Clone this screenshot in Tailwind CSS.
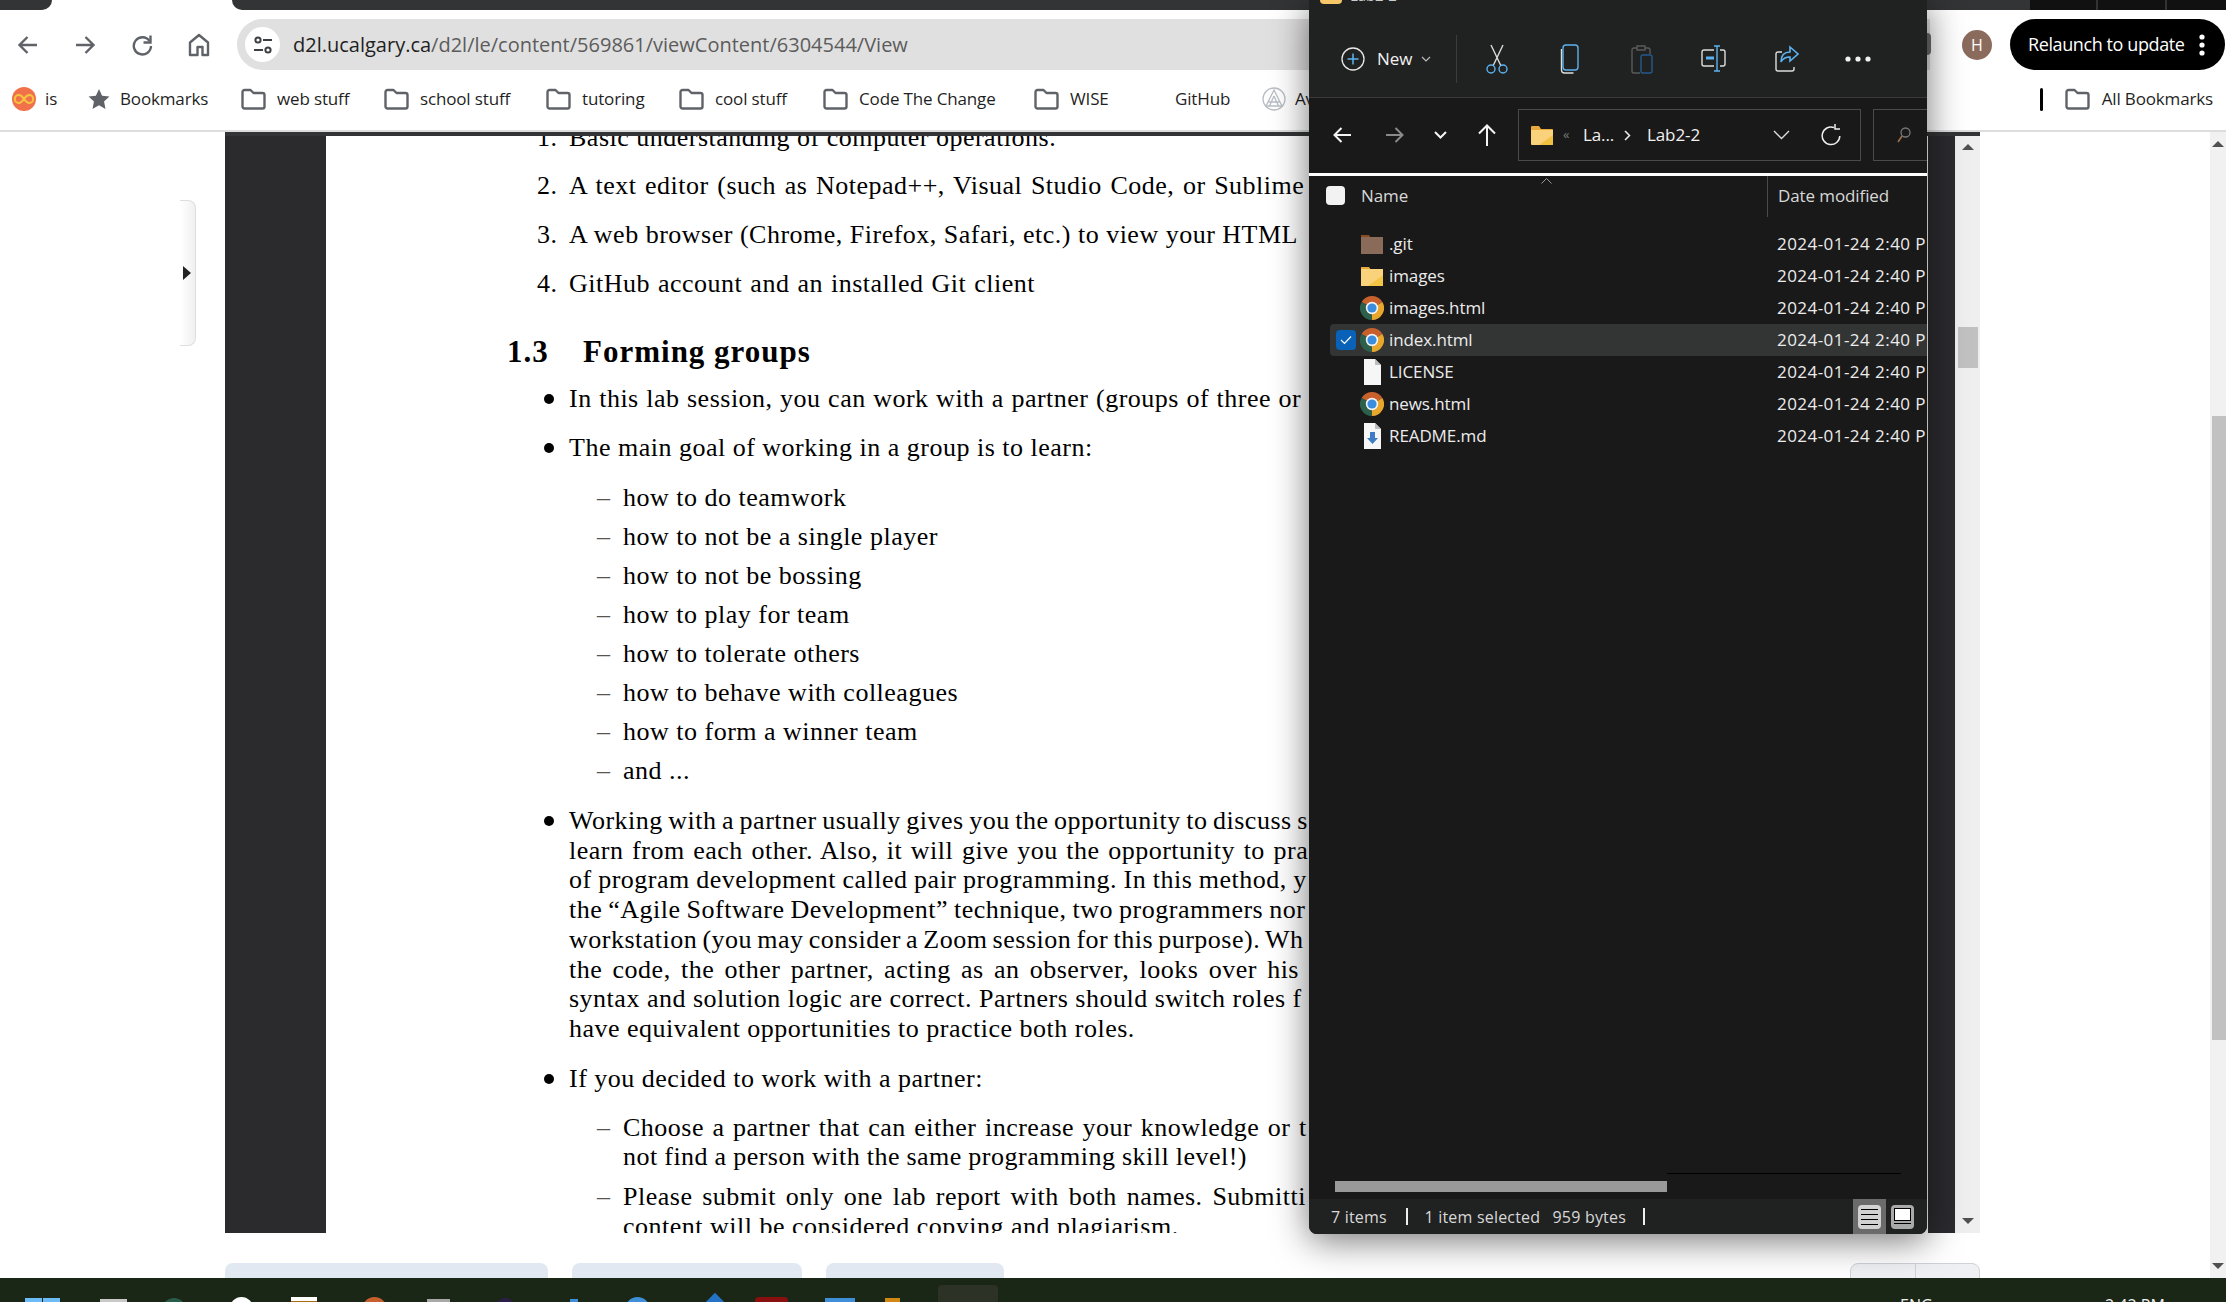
<!DOCTYPE html>
<html lang="en">
  <head>
    <meta charset="UTF-8" />
    <title>Lab 2 - D2L</title>
    <script src="https://cdn.jsdelivr.net/npm/@tailwindcss/browser@4"></script>
  </head>
  <body class="bg-white overflow-hidden font-['Open_Sans',sans-serif]">
    <!-- shared icons -->
    <svg class="hidden">
      <symbol id="bm-folder" viewBox="0 0 25 22">
        <path d="M1.5 4a2 2 0 0 1 2-2h6l3 3h9a2 2 0 0 1 2 2v11.5a2 2 0 0 1-2 2h-18a2 2 0 0 1-2-2z" fill="none" stroke="#5f6368" stroke-width="2.4" stroke-linejoin="round" />
      </symbol>
      <symbol id="chrome" viewBox="0 0 24 24">
        <path d="M12 12 1.6 6A12 12 0 0 1 22.4 6z" fill="#c8602e" />
        <path d="M12 12 22.4 6A12 12 0 0 1 12 24z" fill="#e8a72c" />
        <path d="M12 12 12 24A12 12 0 0 1 1.6 6z" fill="#2e5f4a" />
        <circle cx="12" cy="12" r="6.2" fill="#f4f4f4" />
        <circle cx="12" cy="12" r="4.6" fill="#3b8de0" />
      </symbol>
    </svg>

    <div class="relative w-[2226px] h-[1302px] flex flex-col overflow-hidden">
      <!-- tab strip -->
      <div class="h-[10px] flex shrink-0">
        <div class="w-[52px] bg-[#333435] rounded-br-xl"></div>
        <div class="w-[180px] bg-white"></div>
        <div class="w-[1798px] bg-[#333435] rounded-bl-xl"></div>
        <div class="flex-1 flex bg-[#111]">
          <div class="w-[68px] border-r-2 border-[#333]"></div>
          <div class="w-[69px] border-r-2 border-[#333]"></div>
        </div>
      </div>

      <!-- toolbar -->
      <div class="h-[60px] flex items-center shrink-0 pt-[9px]">
        <div class="w-[57px] ml-[-1px] flex justify-center">
          <svg width="22" height="20" viewBox="0 0 22 20" fill="none" stroke="#5f6368" stroke-width="2.4"><path d="M20 10H3M10.5 2 2.5 10l8 8" /></svg>
        </div>
        <div class="w-[57px] flex justify-center">
          <svg width="22" height="20" viewBox="0 0 22 20" fill="none" stroke="#5f6368" stroke-width="2.4"><path d="M2 10h17M11.5 2l8 8-8 8" /></svg>
        </div>
        <div class="w-[57px] flex justify-center">
          <svg width="22" height="22" viewBox="0 0 22 22" fill="none" stroke="#5f6368" stroke-width="2.4"><path d="M18.5 7A8.6 8.6 0 1 0 20 12" /><path d="M19.5 1.5v7h-7" /></svg>
        </div>
        <div class="w-[57px] flex justify-center">
          <svg width="22" height="24" viewBox="0 0 22 24" fill="none" stroke="#5f6368" stroke-width="2.4" stroke-linejoin="round"><path d="M2 22V9.5L11 2l9 7.5V22h-5.5v-8h-5v8z" /></svg>
        </div>
        <div class="ml-[10px] w-[1693px] h-[51px] bg-[#e0e0e0] rounded-l-full flex items-center pl-2 shrink-0">
          <div class="w-[35px] h-[35px] rounded-full bg-white flex items-center justify-center">
            <svg width="20" height="20" viewBox="0 0 20 20" fill="none" stroke="#3c4043" stroke-width="2"><circle cx="5" cy="5" r="2.6" /><path d="M10 5h9M1 15h9" /><circle cx="15" cy="15" r="2.6" /></svg>
          </div>
          <div class="ml-[13px] text-[20px] tracking-[0px] text-[#5c5c5c] whitespace-nowrap"><span class="text-[#1f1f1f]">d2l.ucalgary.ca</span>/d2l/le/content/569861/viewContent/6304544/View</div>
        </div>
        <div class="ml-[32px] w-[30px] h-[30px] rounded-full bg-[#8b6b5b] text-white text-[16px] flex items-center justify-center shrink-0">H</div>
        <div class="ml-[18px] w-[215px] h-[51px] rounded-full bg-black text-white flex items-center pl-[18px] shrink-0">
          <span class="text-[18px] tracking-[-0.4px] whitespace-nowrap">Relaunch to update</span>
          <svg class="ml-auto mr-[20px]" width="6" height="22" viewBox="0 0 6 22" fill="#fff"><circle cx="3" cy="3" r="2.6" /><circle cx="3" cy="11" r="2.6" /><circle cx="3" cy="19" r="2.6" /></svg>
        </div>
      </div>

      <!-- bookmarks bar -->
      <div class="h-[62px] pb-[2px] flex items-center justify-between shrink-0 border-b-2 border-[#dddddd] text-[17px] tracking-[-0.15px] text-[#1f1f1f] whitespace-nowrap">
        <div class="flex items-center pl-[12px]">
          <div class="w-[76px] flex items-center gap-[9px]">
            <svg width="24" height="24" viewBox="0 0 24 24"><circle cx="12" cy="12" r="12" fill="#f0714a" /><path d="M12 12c-2-3-3.5-4-5.2-4a4 4 0 0 0 0 8c1.700 0 3.200-1 5.200-4s3.500-4 5.200-4a4 4 0 0 1 0 8c-1.700 0-3.200-1-5.200-4z" fill="none" stroke="#f5c542" stroke-width="2" /></svg>
            <span>is</span>
          </div>
          <div class="w-[153px] flex items-center gap-[10px]">
            <svg width="22" height="22" viewBox="0 0 24 24" fill="#5f6368"><path d="m12 1 3.400 7.400 8 .9-5.900 5.500 1.600 8L12 18.800l-7.100 4 1.600-8L.6 9.300l8-.9z" /></svg>
            <span>Bookmarks</span>
          </div>
          <div class="w-[143px] flex items-center gap-[11px]"><svg width="25" height="22"><use href="#bm-folder" /></svg><span>web stuff</span></div>
          <div class="w-[162px] flex items-center gap-[11px]"><svg width="25" height="22"><use href="#bm-folder" /></svg><span>school stuff</span></div>
          <div class="w-[133px] flex items-center gap-[11px]"><svg width="25" height="22"><use href="#bm-folder" /></svg><span>tutoring</span></div>
          <div class="w-[144px] flex items-center gap-[11px]"><svg width="25" height="22"><use href="#bm-folder" /></svg><span>cool stuff</span></div>
          <div class="w-[211px] flex items-center gap-[11px]"><svg width="25" height="22"><use href="#bm-folder" /></svg><span>Code The Change</span></div>
          <div class="w-[141px] flex items-center gap-[11px]"><svg width="25" height="22"><use href="#bm-folder" /></svg><span>WISE</span></div>
          <div class="w-[87px]">GitHub</div>
          <div class="flex items-center gap-[9px]">
            <svg width="24" height="24" viewBox="0 0 24 24" fill="none" stroke="#b9bec4" stroke-width="1.300"><circle cx="12" cy="12" r="11" /><path d="M12 3 4 19h16zM12 9l-4.500 10M12 9l4.500 10M6 15h12" /></svg>
            <span>Av</span>
          </div>
        </div>
        <div class="flex items-center pr-[13px]">
          <div class="w-[3px] h-[23px] bg-black rounded-full mr-[22px]"></div>
          <svg class="mr-[12px]" width="25" height="22"><use href="#bm-folder" /></svg>
          <span>All Bookmarks</span>
        </div>
      </div>

      <!-- page area -->
      <div class="relative flex-1 flex overflow-hidden">
        <!-- left collapsed panel -->
        <div class="w-[225px] shrink-0 pl-[180px] pt-[68px]">
          <div class="w-[16px] h-[146px] rounded-r-lg bg-gradient-to-r from-white to-[#f0f0f0] border border-l-0 border-[#dedede] flex items-center pl-[3px]">
            <div class="w-0 h-0 border-y-[7px] border-y-transparent border-l-[8px] border-l-[#222]"></div>
          </div>
        </div>

        <!-- document viewer and its buttons -->
        <div class="w-[1755px] shrink-0 flex flex-col">
          <div class="h-[1101px] shrink-0 flex border-t-4 border-[#333435]">
            <div class="w-[101px] bg-[#2b2b2d] shrink-0"></div>
            <div class="w-[1602px] shrink-0 overflow-hidden bg-white pl-[211px] font-['Liberation_Serif',serif] text-[26px] tracking-[0.5px] leading-[30px] text-black whitespace-nowrap">
              <div class="mt-[-13px] flex"><span class="w-[32px]">1.</span><span>Basic understanding of computer operations.</span></div>
              <div class="mt-[18px] flex"><span class="w-[32px]">2.</span><span class="[word-spacing:1.6px]">A text editor (such as Notepad++, Visual Studio Code, or Sublime</span></div>
              <div class="mt-[19px] flex"><span class="w-[32px]">3.</span><span>A web browser (Chrome, Firefox, Safari, etc.) to view your HTML</span></div>
              <div class="mt-[19px] flex"><span class="w-[32px]">4.</span><span class="[word-spacing:1px]">GitHub account and an installed Git client</span></div>

              <div class="mt-[35px] ml-[-30px] h-[36px] flex items-center text-[31px] font-bold tracking-[1px]"><span class="w-[76px]">1.3</span><span>Forming groups</span></div>

              <div class="mt-[14px] flex"><span class="w-[32px] h-[30px] pl-[7px] flex items-center"><i class="block w-[10px] h-[10px] rounded-full bg-black"></i></span><span class="[word-spacing:0.5px]">In this lab session, you can work with a partner (groups of three or</span></div>
              <div class="mt-[19px] flex"><span class="w-[32px] h-[30px] pl-[7px] flex items-center"><i class="block w-[10px] h-[10px] rounded-full bg-black"></i></span><span>The main goal of working in a group is to learn:</span></div>

              <div class="mt-[20px] ml-[60px] flex flex-col gap-[9px]">
                <div class="flex"><span class="w-[26px] text-[#555]">–</span><span>how to do teamwork</span></div>
                <div class="flex"><span class="w-[26px] text-[#555]">–</span><span>how to not be a single player</span></div>
                <div class="flex"><span class="w-[26px] text-[#555]">–</span><span>how to not be bossing</span></div>
                <div class="flex"><span class="w-[26px] text-[#555]">–</span><span>how to play for team</span></div>
                <div class="flex"><span class="w-[26px] text-[#555]">–</span><span>how to tolerate others</span></div>
                <div class="flex"><span class="w-[26px] text-[#555]">–</span><span>how to behave with colleagues</span></div>
                <div class="flex"><span class="w-[26px] text-[#555]">–</span><span>how to form a winner team</span></div>
                <div class="flex"><span class="w-[26px] text-[#555]">–</span><span>and ...</span></div>
              </div>

              <div class="mt-[20px] flex leading-[29.7px]">
                <span class="w-[32px] h-[30px] pl-[7px] flex items-center"><i class="block w-[10px] h-[10px] rounded-full bg-black"></i></span>
                <div>
                  <div class="[word-spacing:-1.5px]">Working with a partner usually gives you the opportunity to discuss s</div>
                  <div class="[word-spacing:1.6px]">learn from each other. Also, it will give you the opportunity to pra</div>
                  <div class="[word-spacing:-0.5px]">of program development called pair programming. In this method, y</div>
                  <div class="[word-spacing:-1px]">the “Agile Software Development” technique, two programmers nor</div>
                  <div class="[word-spacing:-1.8px]">workstation (you may consider a Zoom session for this purpose). Wh</div>
                  <div class="[word-spacing:3.3px]">the code, the other partner, acting as an observer, looks over his</div>
                  <div>syntax and solution logic are correct. Partners should switch roles f</div>
                  <div>have equivalent opportunities to practice both roles.</div>
                </div>
              </div>

              <div class="mt-[20px] flex"><span class="w-[32px] h-[30px] pl-[7px] flex items-center"><i class="block w-[10px] h-[10px] rounded-full bg-black"></i></span><span>If you decided to work with a partner:</span></div>

              <div class="mt-[19px] ml-[60px] flex leading-[29.7px]">
                <span class="w-[26px] text-[#555]">–</span>
                <div>
                  <div class="[word-spacing:1.5px]">Choose a partner that can either increase your knowledge or t</div>
                  <div class="[word-spacing:-0.5px]">not find a person with the same programming skill level!)</div>
                </div>
              </div>
              <div class="mt-[10px] ml-[60px] flex leading-[29.7px]">
                <span class="w-[26px] text-[#555]">–</span>
                <div>
                  <div class="[word-spacing:2.8px]">Please submit only one lab report with both names. Submitti</div>
                  <div>content will be considered copying and plagiarism.</div>
                </div>
              </div>
            </div>
            <div class="w-[27px] bg-[#2b2b2f] shrink-0"></div>
            <div class="w-[25px] bg-[#efefef] shrink-0 flex flex-col items-center pt-[8px] pb-[9px]">
              <div class="w-0 h-0 border-x-[6px] border-x-transparent border-b-[6px] border-b-[#505050]"></div>
              <div class="w-[20px] h-[41px] bg-[#c1c1c1] mt-[177px]"></div>
              <div class="mt-auto w-0 h-0 border-x-[6px] border-x-transparent border-t-[6px] border-t-[#505050]"></div>
            </div>
          </div>
          <div class="mt-[30px] flex gap-[24px]">
            <div class="w-[323px] h-[40px] rounded-t-lg bg-[#e2e8f2]"></div>
            <div class="w-[230px] h-[40px] rounded-t-lg bg-[#e2e8f2]"></div>
            <div class="w-[178px] h-[40px] rounded-t-lg bg-[#e2e8f2]"></div>
            <div class="ml-auto w-[130px] h-[40px] rounded-t-lg border border-[#cfd2d6] bg-[#eef0f3] flex">
              <div class="w-[65px] border-r border-[#cfd2d6]"></div>
            </div>
          </div>
        </div>

        <div class="flex-1"></div>

        <!-- page scrollbar -->
        <div class="w-[16px] shrink-0 bg-[#f1f1f1] flex flex-col items-center pt-[9px] pb-[9px]">
          <div class="w-0 h-0 border-x-[6px] border-x-transparent border-b-[6px] border-b-[#505050]"></div>
          <div class="w-[14px] h-[624px] bg-[#c1c1c1] mt-[269px] ml-[2px]"></div>
          <div class="mt-auto w-0 h-0 border-x-[6px] border-x-transparent border-t-[6px] border-t-[#505050]"></div>
        </div>
      </div>

      <!-- taskbar -->
      <div class="relative z-30 h-[24px] shrink-0 bg-[#1a2716] flex overflow-hidden">
        <div class="w-[1900px] relative">
          <div class="absolute left-[25px] top-[20px] w-[35px] h-[10px] grid grid-cols-2 gap-[1px]"><div class="bg-[#6cbcf7]"></div><div class="bg-[#6cbcf7]"></div></div>
          <div class="absolute left-[100px] top-[21px] w-[27px] h-[6px] bg-[#c9c9c9]"></div>
          <div class="absolute left-[162px] top-[20px] w-[24px] h-[24px] rounded-full bg-[#2a5c4c]"></div>
          <div class="absolute left-[230px] top-[19px] w-[23px] h-[23px] rounded-full bg-white"></div>
          <div class="absolute left-[291px] top-[19px] w-[26px] h-[8px] bg-white border-b-4 border-[#b06a12]"></div>
          <div class="absolute left-[362px] top-[19px] w-[25px] h-[25px] rounded-full bg-[#c8602e]"></div>
          <div class="absolute left-[427px] top-[21px] w-[23px] h-[8px] bg-[#a8a8a8]"></div>
          <div class="absolute left-[495px] top-[20px] w-[20px] h-[20px] rounded-full bg-[#2b1f4a]"></div>
          <div class="absolute left-[570px] top-[21px] w-[8px] h-[8px] bg-[#3f8fd8]"></div>
          <div class="absolute left-[625px] top-[19px] w-[25px] h-[25px] rounded-full bg-[#3f8fd8]"></div>
          <div class="absolute left-[705px] top-[19px] w-[20px] h-[20px] rotate-45 bg-[#2573c4]"></div>
          <div class="absolute left-[755px] top-[19px] w-[33px] h-[10px] rounded-t bg-[#8a1010]"></div>
          <div class="absolute left-[825px] top-[20px] w-[30px] h-[10px] bg-[#3f8fd8]"></div>
          <div class="absolute left-[885px] top-[20px] w-[15px] h-[10px] bg-[#d08a14]"></div>
          <div class="absolute left-[938px] top-[7px] w-[60px] h-[24px] rounded-t bg-[#2c3226]"></div>
        </div>
        <div class="w-[205px] pt-[17px] text-[16px] leading-[20px] text-[#f0f0f0] whitespace-nowrap">ENG</div>
        <div class="pt-[17px] text-[16px] leading-[20px] text-[#f0f0f0] whitespace-nowrap">2:42 PM</div>
      </div>

      <!-- file explorer window, floating over the browser -->
      <div class="absolute left-[1309px] top-0 z-20 w-[618px] h-[1234px] flex flex-col overflow-hidden rounded-b-lg bg-[#191919] shadow-[0_6px_36px_rgba(0,0,0,0.55)] text-[#f2f2f2] text-[17px] tracking-[-0.1px] whitespace-nowrap">
        <!-- command bar -->
        <div class="relative h-[98px] shrink-0 bg-[#202121] border-b border-[#3a3a3a] overflow-hidden">
          <div class="flex items-center mt-[-15px] h-[20px] pl-[11px] text-[15px] text-[#ccc]">
            <div class="w-[22px] h-[18px] bg-[#f6c768] rounded-sm"></div>
            <span class="ml-[8px]">Lab2-2</span>
            <div class="ml-auto mr-[103px] w-[10px] h-[10px] border border-[#999] rounded-sm"></div>
            <span class="mr-[32px] text-[#999]">✕</span>
          </div>
          <div class="flex items-center h-[48px] mt-[30px] pl-[32px]">
            <svg width="24" height="24" viewBox="0 0 24 24" fill="none"><circle cx="12" cy="12" r="11" stroke="#e8e8e8" stroke-width="1.300" /><path d="M12 6.500v11M6.500 12h11" stroke="#5cb2f0" stroke-width="1.500" /></svg>
            <span class="ml-[12px] w-[44px]">New</span>
            <svg width="10" height="6" viewBox="0 0 10 6" fill="none" stroke="#bbb" stroke-width="1.200"><path d="m1 1 4 4 4-4" /></svg>
            <div class="ml-[25px] w-[1px] h-[48px] bg-[#3c3c3c]"></div>
            <svg class="ml-[29px]" width="22" height="30" viewBox="0 0 22 30" fill="none" stroke-width="1.400"><path d="M5 1l10 21M17 1 7 22" stroke="#ddd" /><circle cx="5" cy="25" r="4" stroke="#5cb2f0" /><circle cx="17" cy="25" r="4" stroke="#5cb2f0" /></svg>
            <svg class="ml-[52px]" width="20" height="30" viewBox="0 0 20 30" fill="none" stroke-width="1.400"><path d="M1.500 5v21a3 3 0 0 0 3 3h9" stroke="#ddd" /><rect x="3" y="1" width="15" height="25" rx="3" stroke="#5cb2f0" /></svg>
            <svg class="ml-[51px]" width="22" height="30" viewBox="0 0 22 30" fill="none" stroke-width="1.400"><path d="M6 4H3a2 2 0 0 0-2 2v21a2 2 0 0 0 2 2h6M14 4h3a2 2 0 0 1 2 2v4M6 2h8v4H6z" stroke="#5a5a5a" /><rect x="10" y="11" width="11" height="18" rx="2" stroke="#245a8c" /></svg>
            <svg class="ml-[48px]" width="26" height="28" viewBox="0 0 26 28" fill="none" stroke-width="1.400"><path d="M13 5H3a2 2 0 0 0-2 2v12a2 2 0 0 0 2 2h10M19 5h3a2 2 0 0 1 2 2v12a2 2 0 0 1-2 2h-3" stroke="#ddd" /><path d="M5 13h8" stroke="#5cb2f0" stroke-width="3" /><path d="M16 1v25M13 1h6M13 26h6" stroke="#5cb2f0" /></svg>
            <svg class="ml-[48px]" width="24" height="28" viewBox="0 0 24 28" fill="none" stroke-width="1.400"><path d="M7 7H3a2 2 0 0 0-2 2v15a2 2 0 0 0 2 2h14a2 2 0 0 0 2-2v-2" stroke="#ddd" /><path d="M15 2l8 7-8 7v-4c-4 0-7 1-9 5 0-6 3-10 9-10z" stroke="#5cb2f0" stroke-width="1.600" /></svg>
            <svg class="ml-[46px]" width="26" height="6" viewBox="0 0 26 6" fill="#f2f2f2"><circle cx="3" cy="3" r="2.600" /><circle cx="13" cy="3" r="2.600" /><circle cx="23" cy="3" r="2.600" /></svg>
          </div>
        </div>

        <!-- address row -->
        <div class="h-[75px] shrink-0 flex items-center pl-[23px] pb-[1px]">
          <svg width="20" height="18" viewBox="0 0 20 18" fill="none" stroke="#f4f4f4" stroke-width="2"><path d="M19 9H3M9.500 2 2.500 9l7 7" /></svg>
          <svg class="ml-[33px]" width="20" height="18" viewBox="0 0 20 18" fill="none" stroke="#8a8a8a" stroke-width="2"><path d="M1 9h16M10.500 2l7 7-7 7" /></svg>
          <svg class="ml-[29px]" width="13" height="8" viewBox="0 0 13 8" fill="none" stroke="#f4f4f4" stroke-width="2"><path d="m1 1 5.500 5.500L12 1" /></svg>
          <svg class="ml-[30px]" width="20" height="24" viewBox="0 0 20 24" fill="none" stroke="#f4f4f4" stroke-width="2"><path d="M10 23V3M2 10.500l8-8 8 8" /></svg>
          <div class="ml-[21px] w-[343px] h-[52px] shrink-0 border border-[#4a4a4a] flex items-center pl-[12px]">
            <svg width="22" height="20" viewBox="0 0 22 20"><path d="M0 2a1 1 0 0 1 1-1h7l2 3h11a1 1 0 0 1 1 1v2H0z" fill="#e8a93c" /><path d="M0 5h22v14a1 1 0 0 1-1 1H1a1 1 0 0 1-1-1z" fill="#fbd27c" /><path d="M22 10v9a1 1 0 0 1-1 1H8z" fill="#f0c040" /></svg>
            <span class="ml-[10px] w-[20px] text-[13px] text-[#777]">«</span>
            <span class="w-[41px]">La...</span>
            <svg width="7" height="11" viewBox="0 0 7 11" fill="none" stroke="#eee" stroke-width="1.500"><path d="m1 1 4.500 4.500L1 10" /></svg>
            <span class="ml-[16px] w-[126px]">Lab2-2</span>
            <svg width="17" height="10" viewBox="0 0 17 10" fill="none" stroke="#ddd" stroke-width="1.400"><path d="m1 1 7.500 7.500L16 1" /></svg>
            <svg class="ml-[31px]" width="20" height="22" viewBox="0 0 20 22" fill="none" stroke="#eee" stroke-width="1.500"><path d="M13 3.500A8.800 8.800 0 1 0 18.800 12" /><path d="M14 0v5h5" /></svg>
          </div>
          <div class="ml-[12px] flex-1 h-[52px] border border-[#4a4a4a] border-r-0 flex items-center pl-[23px]">
            <svg width="14" height="16" viewBox="0 0 14 16" fill="none" stroke-width="1.300"><circle cx="8.500" cy="5.500" r="4.500" stroke="#777" /><path d="M5 9 1 15" stroke="#a1704a" stroke-width="1.600" /></svg>
          </div>
        </div>

        <!-- file list -->
        <div class="h-[3px] bg-white shrink-0"></div>
        <div class="relative h-[41px] shrink-0 flex items-center pl-[17px] text-[#d8d8d8]">
          <div class="w-[19px] h-[19px] rounded-[4px] bg-[#f2f2f2] mb-[2px]"></div>
          <span class="ml-[16px] w-[406px] mb-[2px]">Name</span>
          <div class="w-[1px] h-[41px] bg-[#4a4a4a]"></div>
          <span class="ml-[10px] mb-[2px]">Date modified</span>
          <svg class="absolute left-[232px] top-[2px]" width="11" height="6" viewBox="0 0 11 6" fill="none" stroke="#999" stroke-width="1"><path d="m.5 5.500 5-5 5 5" /></svg>
        </div>

        <div class="flex-1 mt-[11px] ml-[21px] text-[#ececec]">
          <div class="h-[32px] flex items-center pl-[30px]">
            <div class="w-[24px] mr-[5px] flex justify-center"><svg width="22" height="20" viewBox="0 0 22 20"><path d="M0 1h8l2 3H0z" fill="#8a4a22" /><rect y="3" width="22" height="17" fill="#8a6a58" /></svg></div>
            <span class="w-[388px]">.git</span><span class="tracking-[0.45px]">2024-01-24 2:40 P</span>
          </div>
          <div class="h-[32px] flex items-center pl-[30px]">
            <div class="w-[24px] mr-[5px] flex justify-center"><svg width="22" height="20" viewBox="0 0 22 20"><path d="M0 1h8l2 3H0z" fill="#e8a93c" /><rect y="3" width="22" height="17" fill="#fbd27c" /><path d="M22 9v11H7z" fill="#f3c544" /></svg></div>
            <span class="w-[388px]">images</span><span class="tracking-[0.45px]">2024-01-24 2:40 P</span>
          </div>
          <div class="h-[32px] flex items-center pl-[30px]">
            <svg class="w-[24px] h-[24px] mr-[5px]"><use href="#chrome" /></svg>
            <span class="w-[388px]">images.html</span><span class="tracking-[0.45px]">2024-01-24 2:40 P</span>
          </div>
          <div class="h-[32px] flex items-center pl-[6px] bg-[#333535] rounded-l-sm">
            <div class="w-[20px] h-[20px] mr-[4px] rounded-[4px] bg-[#0a62b8] flex items-center justify-center">
              <svg width="12" height="10" viewBox="0 0 12 10" fill="none" stroke="#fff" stroke-width="1.200"><path d="m1 5 3.500 3.500L11 1.500" /></svg>
            </div>
            <svg class="w-[24px] h-[24px] mr-[5px]"><use href="#chrome" /></svg>
            <span class="w-[388px]">index.html</span><span class="tracking-[0.45px]">2024-01-24 2:40 P</span>
          </div>
          <div class="h-[32px] flex items-center pl-[30px]">
            <div class="w-[24px] mr-[5px] flex justify-center"><svg width="17" height="26" viewBox="0 0 17 26"><path d="M0 0h11l6 6v20H0z" fill="#f6f6f6" /><path d="M11 0v6h6z" fill="#bdbdbd" /></svg></div>
            <span class="w-[388px]">LICENSE</span><span class="tracking-[0.45px]">2024-01-24 2:40 P</span>
          </div>
          <div class="h-[32px] flex items-center pl-[30px]">
            <svg class="w-[24px] h-[24px] mr-[5px]"><use href="#chrome" /></svg>
            <span class="w-[388px]">news.html</span><span class="tracking-[0.45px]">2024-01-24 2:40 P</span>
          </div>
          <div class="h-[32px] flex items-center pl-[30px]">
            <div class="w-[24px] mr-[5px] flex justify-center"><svg width="17" height="26" viewBox="0 0 17 26"><path d="M0 0h11l6 6v20H0z" fill="#f6f6f6" /><path d="M11 0v6h6z" fill="#bdbdbd" /><path d="M6 9h5v6h3l-5.500 6L3 15h3z" fill="#3f7cc4" /></svg></div>
            <span class="w-[388px]">README.md</span><span class="tracking-[0.45px]">2024-01-24 2:40 P</span>
          </div>
        </div>

        <!-- horizontal scroll -->
        <div class="h-[26px] shrink-0 flex pl-[26px]">
          <div class="w-[332px] h-[11px] mt-[8px] bg-[#999]"></div>
          <div class="w-[234px] h-[1px] bg-black"></div>
        </div>

        <!-- status bar -->
        <div class="h-[35px] shrink-0 bg-[#202121] flex items-center pl-[22px] text-[#d8d8d8] text-[16px] tracking-[0.2px]">
          <span class="w-[75px]">7 items</span>
          <div class="w-[1.500px] h-[17px] bg-[#eee]"></div>
          <span class="ml-[17px] w-[128px]">1 item selected</span>
          <span>959 bytes</span>
          <div class="ml-[17px] w-[1.500px] h-[17px] bg-[#eee]"></div>
          <div class="ml-auto mr-[41px] w-[33px] h-[35px] bg-[#6b6b6b] flex items-center justify-center">
            <div class="w-[23px] h-[24px] rounded-sm bg-[#d2d2d2] flex flex-col justify-center gap-[4px] px-[3px]">
              <div class="h-[1px] bg-black"></div><div class="h-[1px] bg-black"></div><div class="h-[1px] bg-black"></div><div class="h-[1px] bg-black"></div>
            </div>
          </div>
        </div>
        <div class="absolute right-[13px] bottom-[5px] w-[23px] h-[24px] rounded-sm bg-[#a9a9a9] p-[3px] flex flex-col gap-[2px]">
          <div class="h-[13px] bg-white border border-black"></div>
          <div class="h-[1px] bg-black"></div>
        </div>
      </div>
      <div class="absolute left-[1927px] top-[33px] z-10 w-[4px] h-[22px] rounded-r bg-[#6b6b6b]"></div>
    </div>
  </body>
</html>
